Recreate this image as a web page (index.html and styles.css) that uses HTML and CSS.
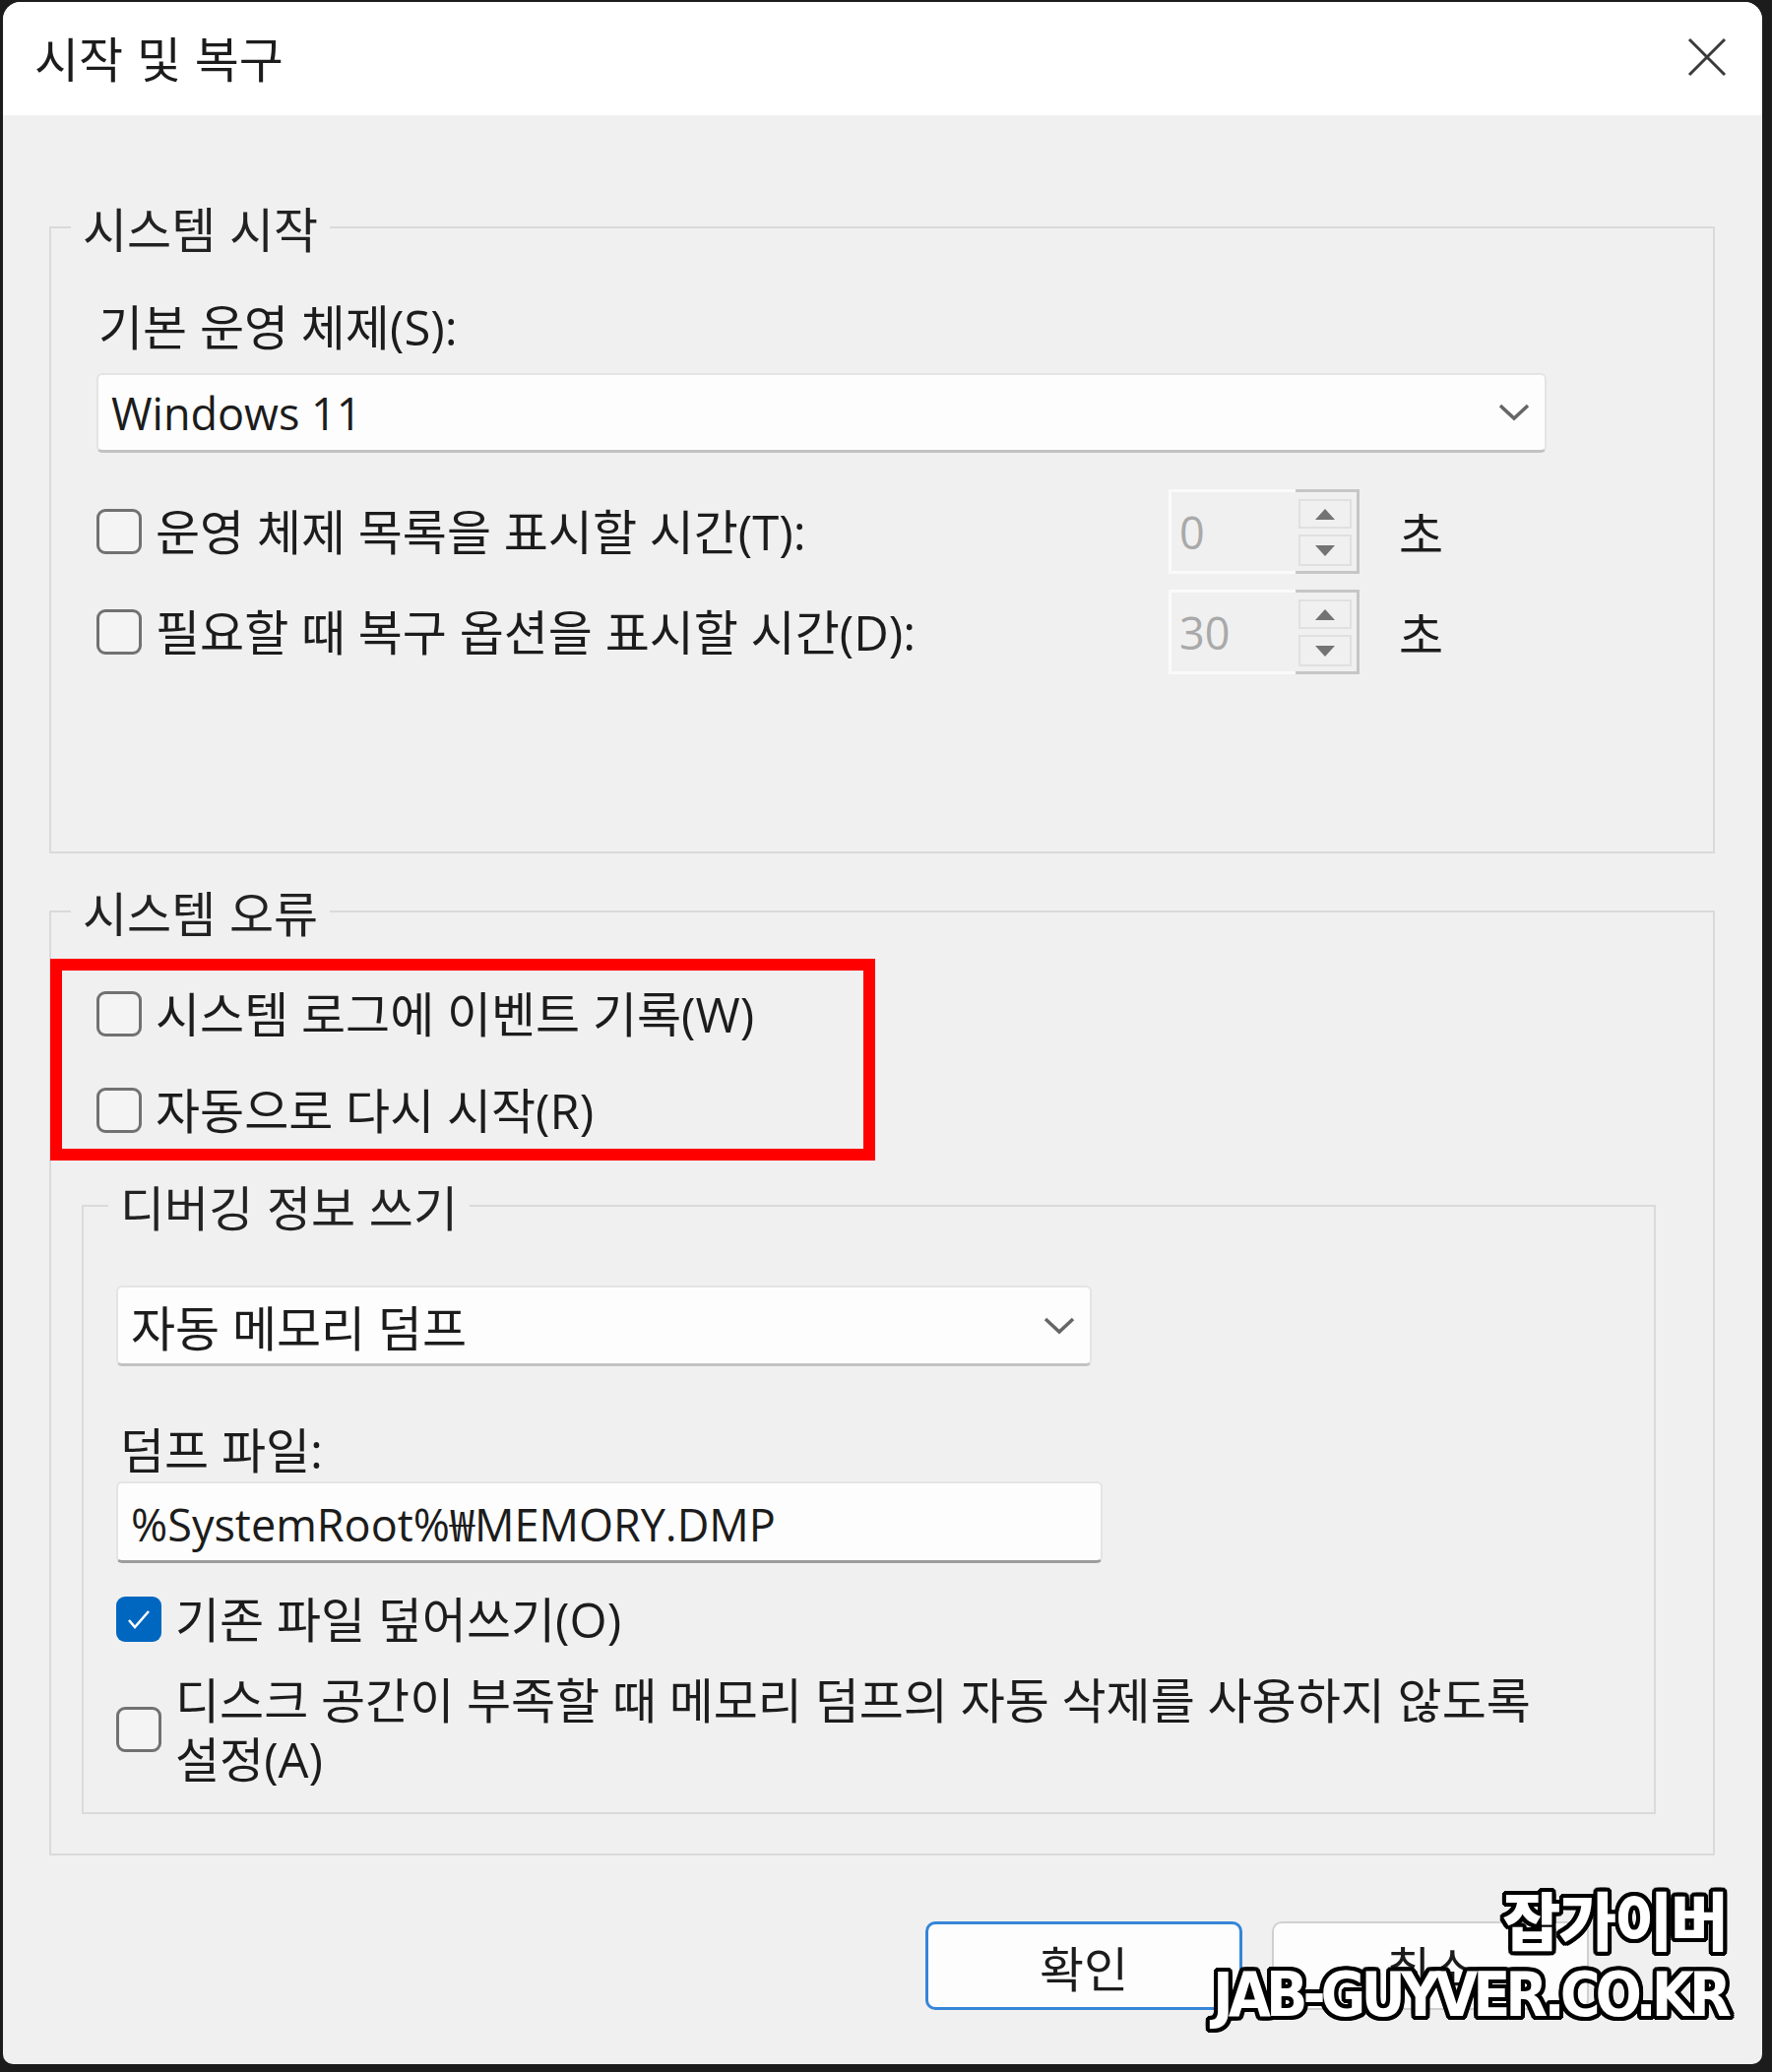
FILE: index.html
```html
<!DOCTYPE html>
<html lang="ko">
<head>
    <meta charset="UTF-8" />
    <meta name="viewport" content="width=device-width, initial-scale=1.0" />
    <title>시작 및 복구</title>
    <link rel="stylesheet" href="styles.css">
</head>
<body>
    <div class="window">
        <div class="titlebar">
            <span class="title">시작 및 복구</span>
            <button type="button" class="close-btn" aria-label="닫기">
                <svg width="40" height="40" viewBox="0 0 40 40"><path d="M2 2 L38 38 M38 2 L2 38" stroke="#3a3a3a" stroke-width="3" fill="none" /></svg>
            </button>
        </div>

        <div class="content">
            <!-- 시스템 시작 -->
            <fieldset class="group">
                <legend>시스템 시작</legend>
                <div class="group-body startup">
                    <div class="field-label">기본 운영 체제(S):</div>
                    <div class="select os-select">
                        <span class="latin">Windows 11</span>
                        <svg class="chevron" width="32" height="18" viewBox="0 0 32 18"><polyline points="2,2 16,15 30,2" stroke="#666" stroke-width="3.5" fill="none" /></svg>
                    </div>

                    <div class="time-row">
                        <label class="check"><span class="box"></span>운영 체제 목록을 표시할 시간(T):</label>
                        <div class="spin">
                            <span class="spin-value">0</span>
                            <span class="spin-buttons">
                                <span class="spin-btn"><svg width="20" height="11" viewBox="0 0 20 11"><polygon points="10,0 20,11 0,11" fill="#737373" /></svg></span>
                                <span class="spin-btn"><svg width="20" height="11" viewBox="0 0 20 11"><polygon points="0,0 20,0 10,11" fill="#737373" /></svg></span>
                            </span>
                        </div>
                        <span class="unit">초</span>
                    </div>

                    <div class="time-row">
                        <label class="check"><span class="box"></span>필요할 때 복구 옵션을 표시할 시간(D):</label>
                        <div class="spin">
                            <span class="spin-value">30</span>
                            <span class="spin-buttons">
                                <span class="spin-btn"><svg width="20" height="11" viewBox="0 0 20 11"><polygon points="10,0 20,11 0,11" fill="#737373" /></svg></span>
                                <span class="spin-btn"><svg width="20" height="11" viewBox="0 0 20 11"><polygon points="0,0 20,0 10,11" fill="#737373" /></svg></span>
                            </span>
                        </div>
                        <span class="unit">초</span>
                    </div>
                </div>
            </fieldset>

            <!-- 시스템 오류 -->
            <fieldset class="group errors">
                <legend>시스템 오류</legend>

                <div class="highlight">
                    <label class="check"><span class="box"></span>시스템 로그에 이벤트 기록(W)</label>
                    <label class="check"><span class="box"></span>자동으로 다시 시작(R)</label>
                </div>

                <fieldset class="group debug">
                    <legend>디버깅 정보 쓰기</legend>
                    <div class="group-body debug-body">
                        <div class="select dump-select">
                            <span>자동 메모리 덤프</span>
                            <svg class="chevron" width="32" height="18" viewBox="0 0 32 18"><polyline points="2,2 16,15 30,2" stroke="#666" stroke-width="3.5" fill="none" /></svg>
                        </div>

                        <div class="field-label dump-label">덤프 파일:</div>
                        <div class="text-input latin">%SystemRoot%₩MEMORY.DMP</div>

                        <label class="check overwrite">
                            <span class="box checked">
                                <svg width="46" height="46" viewBox="0 0 46 46"><polyline points="13,24 19,31 33,15" stroke="#fff" stroke-width="2.5" fill="none" /></svg>
                            </span>
                            기존 파일 덮어쓰기(O)
                        </label>

                        <label class="check multi">
                            <span class="box"></span>
                            <span class="multi-text">디스크 공간이 부족할 때 메모리 덤프의 자동 삭제를 사용하지 않도록 설정(A)</span>
                        </label>
                    </div>
                </fieldset>
            </fieldset>

            <div class="buttons">
                <button type="button" class="btn primary">확인</button>
                <button type="button" class="btn">취소</button>
            </div>
        </div>
    </div>

    <div class="watermark">
        <div class="wm-ko">잡가이버</div>
        <div class="wm-en">JAB-GUYVER.CO.KR</div>
    </div>
</body>
</html>
```

FILE: styles.css
```css
/* Page */
body {
    margin: 0;
    padding: 2px 10px 8px 3px;
    background-color: #1c1c1c;
    font-family: 'Open Sans', 'Noto Sans CJK KR', sans-serif;
    font-size: 49px;
    color: #1c1c1c;
    position: relative;
}

.window {
    height: 2095px;
    background-color: #f0f0f0;
    border-radius: 18px 18px 10px 10px;
    overflow: hidden;
}

.latin {
    font-size: 45px;
}

/* Title bar */
.titlebar {
    height: 115px;
    background-color: #fff;
    display: flex;
    align-items: center;
    justify-content: space-between;
    padding: 0 36px 4px 32px;
    box-sizing: border-box;
}

.title {
    font-family: 'Noto Sans CJK KR', sans-serif;
    line-height: 52px;
}

.close-btn {
    background: none;
    border: none;
    padding: 0;
    display: flex;
}

/* Content */
.content {
    padding: 0 48px 0 47px;
}

.group {
    margin: 0;
    padding: 0;
    border: 2px solid #dadada;
    min-width: 0;
}

.group legend {
    margin-left: 20px;
    padding: 0 12px;
    line-height: 52px;
    font-family: 'Noto Sans CJK KR', sans-serif;
    color: #222;
}

.group:first-child {
    margin-top: 88px;
}

.group-body.startup {
    padding: 49px 0 180px 46px;
}

.field-label {
    line-height: 52px;
    padding-left: 2px;
}

/* Combo boxes and text field */
.select,
.text-input {
    box-sizing: border-box;
    background-color: #fdfdfd;
    border: 2px solid #e4e4e4;
    border-bottom: 3px solid #c2c2c2;
    border-radius: 6px;
    display: flex;
    align-items: center;
    padding-left: 13px;
}

.select {
    justify-content: space-between;
    padding-right: 15px;
}

.os-select {
    width: 1473px;
    height: 81px;
    margin-top: 21px;
}

/* Check boxes */
.check {
    display: flex;
    align-items: center;
    gap: 14px;
    height: 60px;
    line-height: 52px;
}

.box {
    flex: none;
    width: 46px;
    height: 46px;
    box-sizing: border-box;
    border: 3px solid #717171;
    border-radius: 9px;
    background-color: #f4f4f4;
}

.box.checked {
    border: none;
    background-color: #0067c0;
    display: flex;
}

/* Timeout rows */
.time-row {
    display: grid;
    grid-template-columns: 1049px 194px auto;
    column-gap: 40px;
    align-items: center;
    height: 86px;
}

.select + .time-row {
    margin-top: 37px;
}

.time-row + .time-row {
    margin-top: 16px;
}

.spin {
    display: flex;
    height: 86px;
}

.spin-value {
    flex: 1;
    display: flex;
    align-items: center;
    padding-left: 8px;
    background-color: #f0f0f0;
    border: 3px solid #fafafa;
    border-right: none;
    color: #a9a9a9;
    font-size: 45px;
}

.spin-buttons {
    width: 65px;
    box-sizing: border-box;
    border: 3px solid #c6c6c6;
    border-left: none;
    padding: 7px 5px 5px 3px;
    display: flex;
    flex-direction: column;
    gap: 6px;
}

.spin-btn {
    height: 30px;
    border: 2px solid #e0e0e0;
    box-sizing: border-box;
    display: flex;
    align-items: center;
    justify-content: center;
}

.spin-btn + .spin-btn {
    height: 32px;
}

.unit {
    font-family: 'Noto Sans CJK KR', sans-serif;
}

/* System failure group */
.group.errors {
    margin-top: 33px;
    padding-bottom: 40px;
}

.highlight {
    width: 838px;
    box-sizing: border-box;
    margin: 22px 0 0 -1px;
    border: 12px solid #ff0000;
    padding: 14px 0 9px 35px;
    display: flex;
    flex-direction: column;
    gap: 38px;
}

.group.debug {
    margin: 20px 0 0 31px;
    width: 1595px;
}

.group.debug legend {
    margin-left: 25px;
}

.debug-body {
    padding: 55px 0 24px 33px;
}

.dump-select {
    width: 991px;
    height: 82px;
}

.dump-label {
    margin-top: 59px;
    padding-left: 4px;
}

.text-input {
    width: 1002px;
    height: 83px;
    margin-top: 6px;
    border-bottom-color: #9c9c9c;
}

.check.overwrite {
    margin-top: 27px;
}

.check.multi {
    margin-top: 22px;
    height: auto;
}

.multi-text {
    max-width: 1450px;
    line-height: 60px;
    word-break: keep-all;
}

/* Dialog buttons */
.buttons {
    display: flex;
    justify-content: flex-end;
    gap: 30px;
    margin: 67px 128px 0 0;
}

.btn {
    width: 322px;
    height: 90px;
    font-family: 'Noto Sans CJK KR', sans-serif;
    font-size: 49px;
    color: #1c1c1c;
    background-color: #fdfdfd;
    border: 2px solid #d0d0d0;
    border-radius: 10px;
}

.btn.primary {
    border: 3px solid #3585d8;
}

/* Watermark */
.watermark {
    position: absolute;
    right: 46px;
    top: 1910px;
    text-align: right;
    color: #fff;
    font-weight: 900;
    text-shadow:
        4px 0 #000, -4px 0 #000, 0 4px #000, 0 -4px #000,
        3px 3px #000, -3px -3px #000, 3px -3px #000, -3px 3px #000,
        2px 4px #000, -2px 4px #000, 2px -4px #000, -2px -4px #000,
        4px 2px #000, -4px 2px #000, 4px -2px #000, -4px -2px #000;
}

.wm-ko {
    font-family: 'Noto Sans CJK KR', sans-serif;
    font-size: 64px;
    line-height: 76px;
    letter-spacing: -2px;
}

.wm-en {
    font-family: 'Liberation Sans Narrow', 'DejaVu Sans Condensed', sans-serif;
    font-weight: 700;
    font-size: 62px;
    line-height: 82px;
    letter-spacing: -5px;
}
```
